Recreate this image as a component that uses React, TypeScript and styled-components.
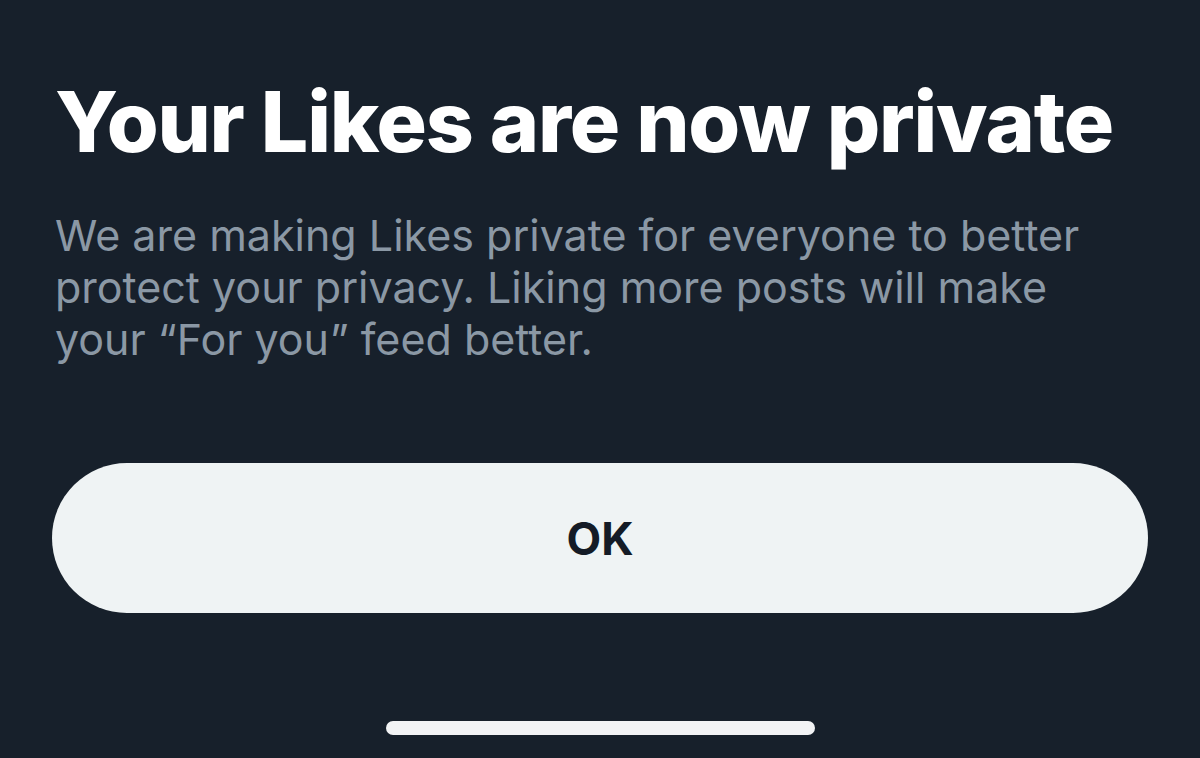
import styled, { createGlobalStyle } from 'styled-components'

const GlobalStyle = createGlobalStyle`
  html, body {
    margin: 0;
    padding: 0;
    background: #17202b;
  }
  body {
    font-family: Inter, 'Noto Sans', 'Liberation Sans', sans-serif;
  }
`

const Screen = styled.div`
  width: 1200px;
  height: 758px;
  background: #17202b;
  display: flex;
  flex-direction: column;
  box-sizing: border-box;
  padding: 64px 52px 0;
  overflow: hidden;
`

const Title = styled.h1`
  margin: 0 0 0 3px;
  color: #ffffff;
  font-size: 84px;
  font-weight: 800;
  line-height: 116px;
  letter-spacing: -1.2px;
  white-space: nowrap;
`

const Body = styled.p`
  margin: 29px 0 0 3px;
  color: #8b98a5;
  font-size: 43px;
  font-weight: 400;
  line-height: 52px;
  max-width: 1060px;
`

const OkButton = styled.button`
  margin-top: 98px;
  height: 150px;
  width: 100%;
  border: none;
  border-radius: 75px;
  background: #eff3f4;
  color: #141b26;
  font-family: Inter, 'Noto Sans', 'Liberation Sans', sans-serif;
  font-size: 45px;
  font-weight: 700;
  cursor: pointer;
`

const HomeBarRow = styled.div`
  margin-top: auto;
  padding-bottom: 23px;
  display: flex;
  justify-content: center;
`

const HomeBar = styled.div`
  width: 429px;
  height: 14px;
  border-radius: 7px;
  background: #f2f3f5;
  margin-left: 1px;
`

export default function App() {
  return (
    <>
      <GlobalStyle />
      <Screen>
        <Title>Your Likes are now private</Title>
        <Body>
          We are making Likes private for everyone to better protect your
          privacy. Liking more posts will make your “For you” feed better.
        </Body>
        <OkButton>OK</OkButton>
        <HomeBarRow>
          <HomeBar />
        </HomeBarRow>
      </Screen>
    </>
  )
}
